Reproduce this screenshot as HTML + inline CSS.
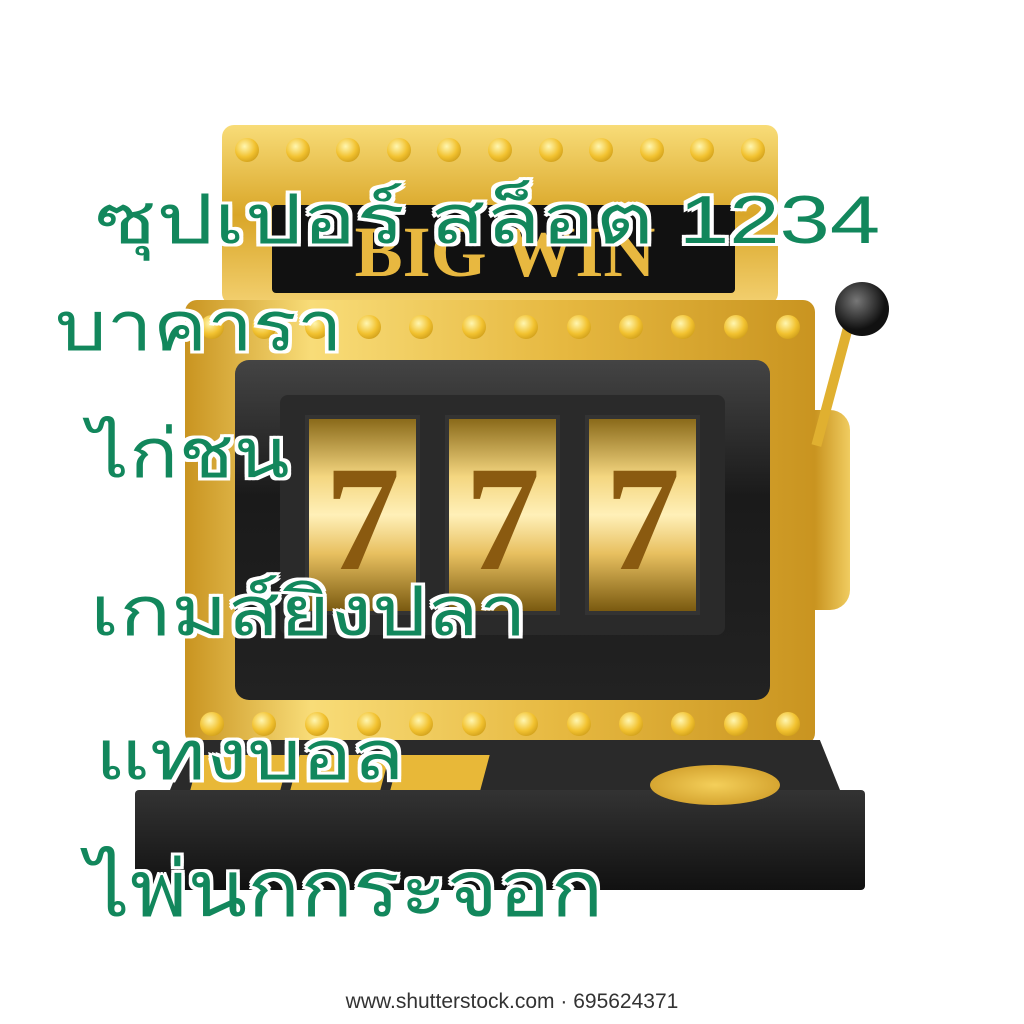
<!DOCTYPE html>
<html><head><meta charset="utf-8"><style>
html,body{margin:0;padding:0;background:#fff;}
#c{position:relative;width:1024px;height:1024px;overflow:hidden;background:#fff;font-family:"Liberation Sans","DejaVu Sans",sans-serif;}
.a{position:absolute;}
.t{position:absolute;color:#12875c;font-size:68px;line-height:1;white-space:nowrap;transform-origin:left top;
 text-shadow:-3px -3px 0 #fff,3px -3px 0 #fff,-3px 3px 0 #fff,3px 3px 0 #fff,0 3px 0 #fff,0 -3px 0 #fff,3px 0 0 #fff,-3px 0 0 #fff;}
.bulbs{position:absolute;display:flex;justify-content:space-between;}
.b{width:24px;height:24px;border-radius:50%;background:radial-gradient(circle at 40% 35%,#fff6b0,#f2c230 50%,#b8860b);}
.reel{position:absolute;top:415px;width:115px;height:200px;background:linear-gradient(#8a6a1a,#f4d680 30%,#fff0b8 50%,#e8c060 70%,#7a5a10);border:4px solid #333;box-sizing:border-box;
 font:bold 150px "Liberation Serif",serif;color:#8a5a10;text-align:center;line-height:200px;}
</style></head><body><div id="c">
<div class="a" style="left:222px;top:125px;width:556px;height:180px;border-radius:12px;background:linear-gradient(#f8dc78,#d9a628 50%,#f3d070);"></div>
<div class="bulbs" style="left:235px;top:138px;width:530px;"><div class="b"></div><div class="b"></div><div class="b"></div><div class="b"></div><div class="b"></div><div class="b"></div><div class="b"></div><div class="b"></div><div class="b"></div><div class="b"></div><div class="b"></div></div>
<div class="a" style="left:272px;top:205px;width:463px;height:88px;background:#111;border-radius:4px;"></div>
<div class="a" style="left:300px;top:212px;width:410px;height:80px;font:bold 72px 'Liberation Serif',serif;color:#e8b840;text-align:center;line-height:80px;">BIG WIN</div>
<div class="a" style="left:185px;top:300px;width:630px;height:445px;border-radius:12px;background:linear-gradient(90deg,#c99420,#f8dc78 20%,#e6b840 60%,#c99420);"></div>
<div class="bulbs" style="left:200px;top:315px;width:600px;"><div class="b"></div><div class="b"></div><div class="b"></div><div class="b"></div><div class="b"></div><div class="b"></div><div class="b"></div><div class="b"></div><div class="b"></div><div class="b"></div><div class="b"></div><div class="b"></div></div>
<div class="bulbs" style="left:200px;top:712px;width:600px;"><div class="b"></div><div class="b"></div><div class="b"></div><div class="b"></div><div class="b"></div><div class="b"></div><div class="b"></div><div class="b"></div><div class="b"></div><div class="b"></div><div class="b"></div><div class="b"></div></div>
<div class="a" style="left:235px;top:360px;width:535px;height:340px;border-radius:14px;background:linear-gradient(#444,#1a1a1a 40%,#222);"></div>
<div class="a" style="left:280px;top:395px;width:445px;height:240px;border-radius:8px;background:#2a2a2a;"></div>
<div class="reel" style="left:305px;">7</div>
<div class="reel" style="left:445px;">7</div>
<div class="reel" style="left:585px;">7</div>
<div class="a" style="left:815px;top:410px;width:35px;height:200px;border-radius:0 20px 20px 0;background:linear-gradient(90deg,#c99420,#f0cc60);"></div>
<div class="a" style="left:845px;top:320px;width:10px;height:130px;background:#e0b030;transform:rotate(15deg);transform-origin:top;"></div>
<div class="a" style="left:835px;top:282px;width:54px;height:54px;border-radius:50%;background:radial-gradient(circle at 40% 35%,#777,#111 60%);"></div>
<div class="a" style="left:170px;top:740px;width:670px;height:50px;background:#2a2a2a;clip-path:polygon(3% 0,97% 0,100% 100%,0 100%);"></div>
<div class="a" style="left:135px;top:790px;width:730px;height:100px;background:linear-gradient(#333,#111);border-radius:4px;"></div>
<div class="a" style="left:195px;top:755px;width:90px;height:35px;background:#e8b838;transform:skewX(-15deg);"></div>
<div class="a" style="left:295px;top:755px;width:90px;height:35px;background:#e8b838;transform:skewX(-15deg);"></div>
<div class="a" style="left:395px;top:755px;width:90px;height:35px;background:#e8b838;transform:skewX(-15deg);"></div>
<div class="a" style="left:650px;top:765px;width:130px;height:40px;border-radius:50%;background:radial-gradient(#f4cf5a,#c99420);"></div>
<div class="t" style="left:95px;top:186px;transform:scaleX(1.33);">ซุปเปอร์ สล็อต 1234</div>
<div class="t" style="left:55px;top:293px;transform:scaleX(1.2);">บาคารา</div>
<div class="t" style="left:88px;top:420px;transform:scaleX(1.2);">ไก่ชน</div>
<div class="t" style="left:90px;top:578px;transform:scaleX(1.26);">เกมส์ยิงปลา</div>
<div class="t" style="left:95px;top:722px;transform:scaleX(1.25);">แทงบอล</div>
<div class="t" style="left:86px;top:850px;font-size:78px;transform:scaleX(1.12);">ไพ่นกกระจอก</div>
<div class="a" style="left:0;width:1024px;top:990px;text-align:center;font-size:21px;color:#333;">www.shutterstock.com · 695624371</div>
</div></body></html>
